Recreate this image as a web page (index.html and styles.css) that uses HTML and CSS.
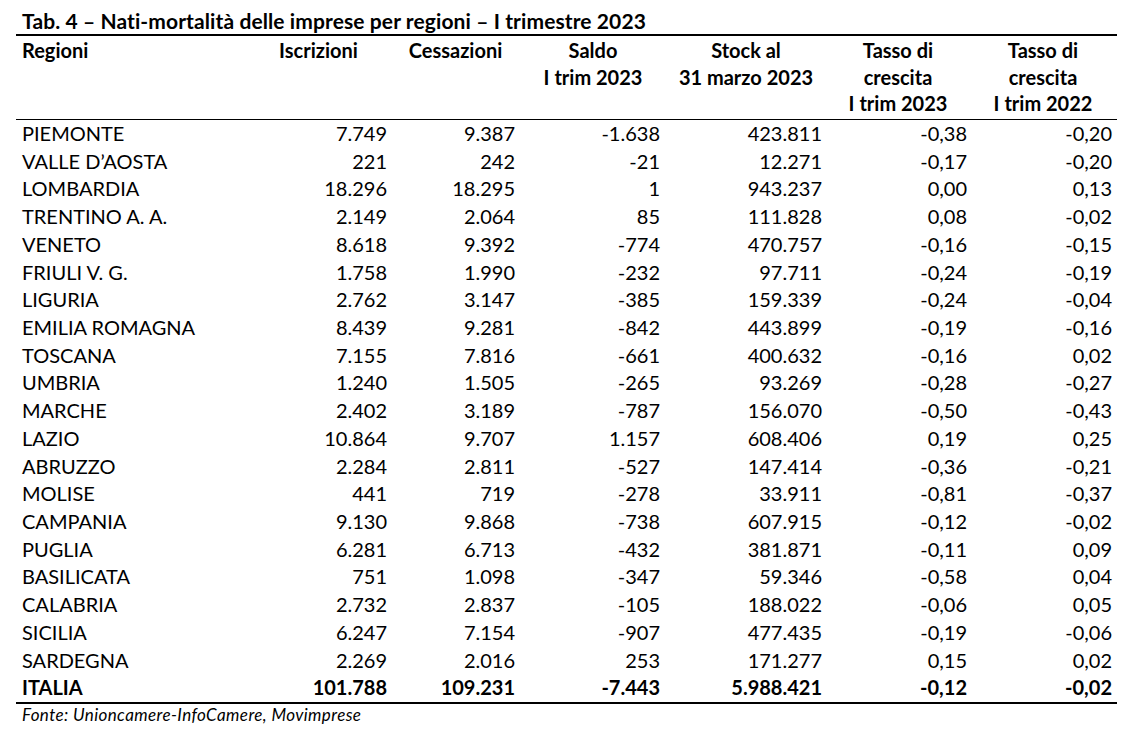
FILE: index.html
```html
<!DOCTYPE html>
<html lang="it">
<head>
<meta charset="utf-8">
<title>Tab. 4 – Nati-mortalità delle imprese per regioni</title>
<link rel="stylesheet" href="styles.css">
</head>
<body>
<div class="page">
  <div class="title">Tab. 4 – Nati-mortalità delle imprese per regioni – I trimestre 2023</div>
  <div class="table">
    <div class="row head">
      <div class="cell name">Regioni</div>
      <div class="cell c1">Iscrizioni</div>
      <div class="cell c2">Cessazioni</div>
      <div class="cell c3">Saldo<br>I trim 2023</div>
      <div class="cell c4">Stock al<br>31 marzo 2023</div>
      <div class="cell c5">Tasso di<br>crescita<br>I trim 2023</div>
      <div class="cell c6">Tasso di<br>crescita<br>I trim 2022</div>
    </div>
    <div class="body">
      <div class="row"><div class="cell name">PIEMONTE</div><div class="cell c1">7.749</div><div class="cell c2">9.387</div><div class="cell c3">-1.638</div><div class="cell c4">423.811</div><div class="cell c5">-0,38</div><div class="cell c6">-0,20</div></div>
      <div class="row"><div class="cell name">VALLE D’AOSTA</div><div class="cell c1">221</div><div class="cell c2">242</div><div class="cell c3">-21</div><div class="cell c4">12.271</div><div class="cell c5">-0,17</div><div class="cell c6">-0,20</div></div>
      <div class="row"><div class="cell name">LOMBARDIA</div><div class="cell c1">18.296</div><div class="cell c2">18.295</div><div class="cell c3">1</div><div class="cell c4">943.237</div><div class="cell c5">0,00</div><div class="cell c6">0,13</div></div>
      <div class="row"><div class="cell name">TRENTINO A. A.</div><div class="cell c1">2.149</div><div class="cell c2">2.064</div><div class="cell c3">85</div><div class="cell c4">111.828</div><div class="cell c5">0,08</div><div class="cell c6">-0,02</div></div>
      <div class="row"><div class="cell name">VENETO</div><div class="cell c1">8.618</div><div class="cell c2">9.392</div><div class="cell c3">-774</div><div class="cell c4">470.757</div><div class="cell c5">-0,16</div><div class="cell c6">-0,15</div></div>
      <div class="row"><div class="cell name">FRIULI V. G.</div><div class="cell c1">1.758</div><div class="cell c2">1.990</div><div class="cell c3">-232</div><div class="cell c4">97.711</div><div class="cell c5">-0,24</div><div class="cell c6">-0,19</div></div>
      <div class="row"><div class="cell name">LIGURIA</div><div class="cell c1">2.762</div><div class="cell c2">3.147</div><div class="cell c3">-385</div><div class="cell c4">159.339</div><div class="cell c5">-0,24</div><div class="cell c6">-0,04</div></div>
      <div class="row"><div class="cell name">EMILIA ROMAGNA</div><div class="cell c1">8.439</div><div class="cell c2">9.281</div><div class="cell c3">-842</div><div class="cell c4">443.899</div><div class="cell c5">-0,19</div><div class="cell c6">-0,16</div></div>
      <div class="row"><div class="cell name">TOSCANA</div><div class="cell c1">7.155</div><div class="cell c2">7.816</div><div class="cell c3">-661</div><div class="cell c4">400.632</div><div class="cell c5">-0,16</div><div class="cell c6">0,02</div></div>
      <div class="row"><div class="cell name">UMBRIA</div><div class="cell c1">1.240</div><div class="cell c2">1.505</div><div class="cell c3">-265</div><div class="cell c4">93.269</div><div class="cell c5">-0,28</div><div class="cell c6">-0,27</div></div>
      <div class="row"><div class="cell name">MARCHE</div><div class="cell c1">2.402</div><div class="cell c2">3.189</div><div class="cell c3">-787</div><div class="cell c4">156.070</div><div class="cell c5">-0,50</div><div class="cell c6">-0,43</div></div>
      <div class="row"><div class="cell name">LAZIO</div><div class="cell c1">10.864</div><div class="cell c2">9.707</div><div class="cell c3">1.157</div><div class="cell c4">608.406</div><div class="cell c5">0,19</div><div class="cell c6">0,25</div></div>
      <div class="row"><div class="cell name">ABRUZZO</div><div class="cell c1">2.284</div><div class="cell c2">2.811</div><div class="cell c3">-527</div><div class="cell c4">147.414</div><div class="cell c5">-0,36</div><div class="cell c6">-0,21</div></div>
      <div class="row"><div class="cell name">MOLISE</div><div class="cell c1">441</div><div class="cell c2">719</div><div class="cell c3">-278</div><div class="cell c4">33.911</div><div class="cell c5">-0,81</div><div class="cell c6">-0,37</div></div>
      <div class="row"><div class="cell name">CAMPANIA</div><div class="cell c1">9.130</div><div class="cell c2">9.868</div><div class="cell c3">-738</div><div class="cell c4">607.915</div><div class="cell c5">-0,12</div><div class="cell c6">-0,02</div></div>
      <div class="row"><div class="cell name">PUGLIA</div><div class="cell c1">6.281</div><div class="cell c2">6.713</div><div class="cell c3">-432</div><div class="cell c4">381.871</div><div class="cell c5">-0,11</div><div class="cell c6">0,09</div></div>
      <div class="row"><div class="cell name">BASILICATA</div><div class="cell c1">751</div><div class="cell c2">1.098</div><div class="cell c3">-347</div><div class="cell c4">59.346</div><div class="cell c5">-0,58</div><div class="cell c6">0,04</div></div>
      <div class="row"><div class="cell name">CALABRIA</div><div class="cell c1">2.732</div><div class="cell c2">2.837</div><div class="cell c3">-105</div><div class="cell c4">188.022</div><div class="cell c5">-0,06</div><div class="cell c6">0,05</div></div>
      <div class="row"><div class="cell name">SICILIA</div><div class="cell c1">6.247</div><div class="cell c2">7.154</div><div class="cell c3">-907</div><div class="cell c4">477.435</div><div class="cell c5">-0,19</div><div class="cell c6">-0,06</div></div>
      <div class="row"><div class="cell name">SARDEGNA</div><div class="cell c1">2.269</div><div class="cell c2">2.016</div><div class="cell c3">253</div><div class="cell c4">171.277</div><div class="cell c5">0,15</div><div class="cell c6">0,02</div></div>
      <div class="row total"><div class="cell name">ITALIA</div><div class="cell c1">101.788</div><div class="cell c2">109.231</div><div class="cell c3">-7.443</div><div class="cell c4">5.988.421</div><div class="cell c5">-0,12</div><div class="cell c6">-0,02</div></div>
    </div>
  </div>
  <div class="source">Fonte: Unioncamere-InfoCamere, Movimprese</div>
</div>
</body>
</html>
```

FILE: styles.css
```css
html, body {
  margin: 0;
  padding: 0;
  background: #ffffff;
}

body {
  font-family: Lato, "Open Sans", "Liberation Sans", sans-serif;
  font-size: 20px;
  color: #000000;
}

.page {
  width: 1101px;
  margin-left: 16px;
}

.title {
  font-weight: 700;
  font-size: 21px;
  letter-spacing: 0.1px;
  line-height: 26.5px;
  padding-top: 7.5px;
  padding-left: 6px;
  white-space: nowrap;
}

.row {
  display: grid;
  grid-template-columns: 234px 146px 130px 144px 159px 145px 143px;
  height: 27.72px;
  line-height: 27.72px;
  white-space: nowrap;
}

.head {
  height: auto;
  line-height: 26.3px;
  font-weight: 700;
  border-top: 2px solid #000;
  border-bottom: 1px solid #000;
  padding: 1.4px 0 2.7px;
}

.head .cell {
  text-align: center;
}

.head .cell.name {
  text-align: left;
}

.body {
  border-bottom: 2px solid #000;
}

.cell {
  text-align: right;
}

.cell.name {
  text-align: left;
  padding-left: 6px;
}

.c1 { padding-right: 9px; }
.c2 { padding-right: 11px; }
.c3 { padding-right: 10px; }
.c4 { padding-right: 7px; }
.c5 { padding-right: 7px; }
.c6 { padding-right: 5px; }

.total {
  font-weight: 700;
}

.source {
  font-style: italic;
  font-size: 17px;
  letter-spacing: 0.4px;
  line-height: 20px;
  padding-top: 0.5px;
  padding-left: 6px;
}
```
